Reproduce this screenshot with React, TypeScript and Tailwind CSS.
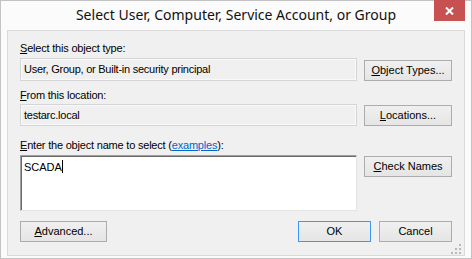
import React from "react";

const F = { fontFamily: '"Liberation Sans", Arial, sans-serif' };

function U({ c }: { c: string }) {
  return <span className="underline underline-offset-[1px]">{c}</span>;
}

function Btn({
  children,
  className = "",
  primary = false,
}: {
  children: React.ReactNode;
  className?: string;
  primary?: boolean;
}) {
  return (
    <div
      className={
        "h-[21px] flex items-center justify-center text-[11px] text-black bg-gradient-to-b from-[#f0f0f0] to-[#e5e5e5] border " +
        (primary ? "border-[#3399ff] " : "border-[#acacac] ") +
        className
      }
    >
      {children}
    </div>
  );
}

export default function App() {
  return (
    <div
      className="relative w-[472px] h-[259px] bg-[#fbfbfb] border border-[#c3c3c3] flex flex-col"
      style={F}
    >
      <div className="relative h-[29px] flex items-center justify-center">
        <span
          className="text-[14px] text-[#111111] leading-none -mt-[2px]"
          style={{ fontFamily: '"Noto Sans", "Open Sans", sans-serif' }}
        >
          Select User, Computer, Service Account, or Group
        </span>
        <div className="absolute right-[6px] -top-px w-[31px] h-[21px] bg-[#c75050] flex items-center justify-center">
          <svg width="9" height="8" viewBox="0 0 9 8">
            <path d="M1 0.5 L8 7.5 M8 0.5 L1 7.5" stroke="#fff" strokeWidth="2" />
          </svg>
        </div>
      </div>

      <div className="relative mx-[6px] mb-[2px] flex-1 border border-[#d9d9d9] bg-[#f0f0f0] px-[12px] text-[11px] text-black">
        <div className="mt-[10px] h-[14px] leading-[14px] tracking-[-0.2px]">
          <U c="S" />elect this object type:
        </div>
        <div className="mt-[3px] flex gap-[7px]">
          <div className="w-[337px] h-[23px] border border-[#d5d5d5] shadow-[inset_0_0_0_1px_#f9f9f9] flex items-center pl-[3px] leading-none tracking-[-0.25px]">
            User, Group, or Built-in security principal
          </div>
          <Btn className="w-[88px] mt-[2px]">
            <U c="O" />bject Types...
          </Btn>
        </div>

        <div className="mt-[7px] h-[14px] leading-[14px] tracking-[-0.2px]">
          <U c="F" />rom this location:
        </div>
        <div className="mt-[2px] flex gap-[7px]">
          <div className="w-[337px] h-[22px] border border-[#d5d5d5] shadow-[inset_0_0_0_1px_#f9f9f9] flex items-center pl-[3px] leading-none tracking-[-0.25px]">
            testarc.local
          </div>
          <Btn className="w-[88px] mt-[1px]">
            <U c="L" />ocations...
          </Btn>
        </div>

        <div className="mt-[12px] h-[14px] leading-[14px] tracking-[-0.2px]">
          <U c="E" />nter the object name to select (
          <span className="text-[#0066cc] underline underline-offset-[1px]">examples</span>
          ):
        </div>
        <div className="mt-[3px] flex gap-[7px]">
          <div className="w-[337px] h-[56px] bg-white border border-t-[#a0a0a0] border-l-[#a0a0a0] border-r-[#e3e3e3] border-b-[#e3e3e3] shadow-[inset_1px_1px_0_#696969] pl-[3px] pt-[4px] leading-[12px]">
            SCADA
            <span className="inline-block w-px h-[13px] bg-black align-[-2px]" />
          </div>
          <Btn className="w-[88px] mt-[1px]">
            <U c="C" />heck Names
          </Btn>
        </div>

        <div className="mt-[10px] flex">
          <Btn className="w-[87px]">
            <U c="A" />dvanced...
          </Btn>
          <div className="flex-1" />
          <Btn className="w-[73px]" primary>
            OK
          </Btn>
          <Btn className="w-[73px] ml-[8px]">Cancel</Btn>
        </div>

        <svg
          className="absolute right-[3px] bottom-[1px]"
          width="10"
          height="10"
          viewBox="0 0 10 10"
        >
          <rect x="8" y="0" width="2" height="2" fill="#b8b8b8" />
          <rect x="4" y="4" width="2" height="2" fill="#b8b8b8" />
          <rect x="8" y="4" width="2" height="2" fill="#b8b8b8" />
          <rect x="0" y="8" width="2" height="2" fill="#b8b8b8" />
          <rect x="4" y="8" width="2" height="2" fill="#b8b8b8" />
          <rect x="8" y="8" width="2" height="2" fill="#b8b8b8" />
        </svg>
      </div>
    </div>
  );
}
